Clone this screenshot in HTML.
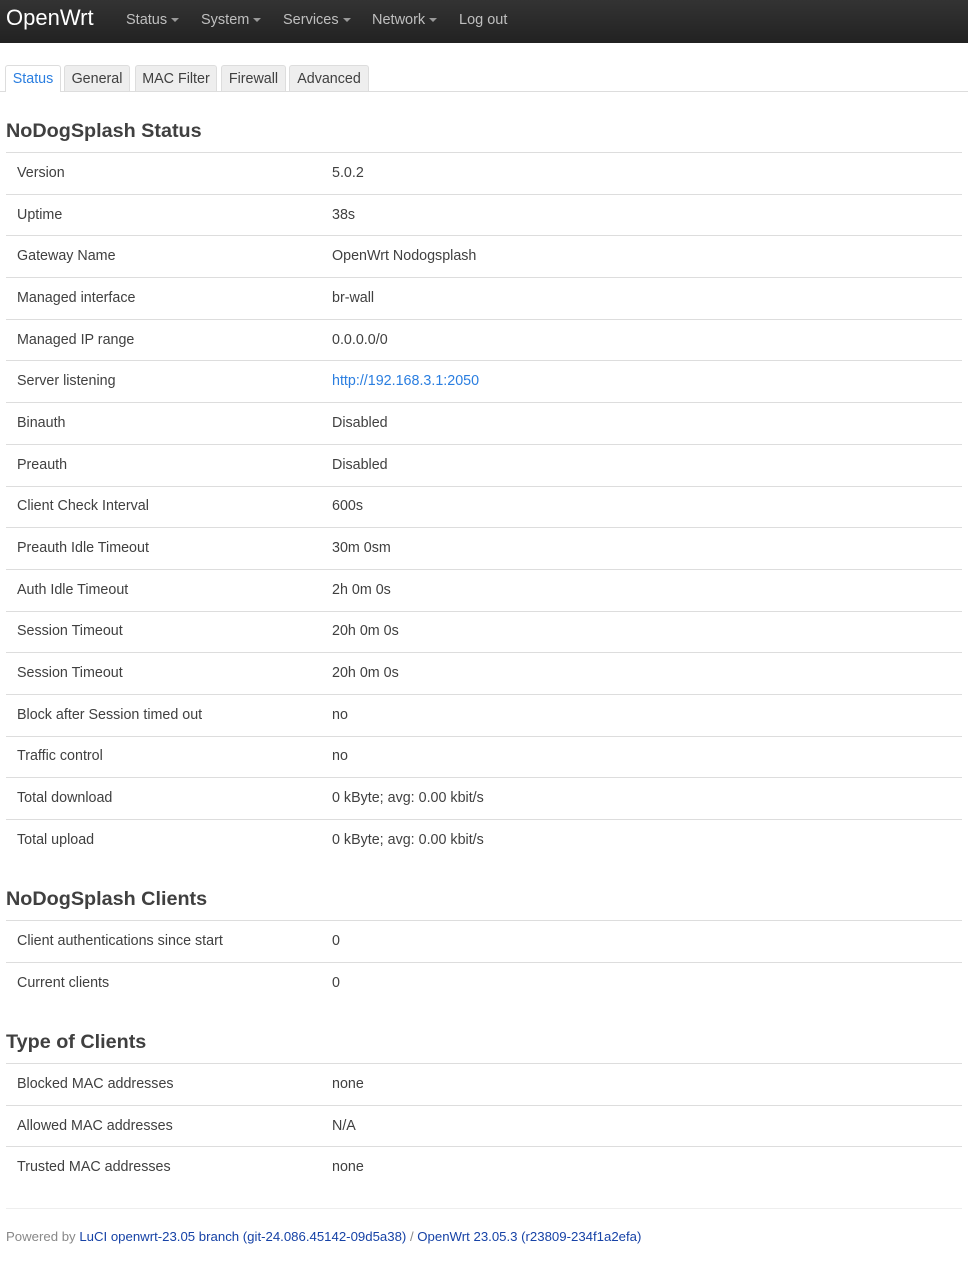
<!DOCTYPE html>
<html><head><meta charset="utf-8"><style>
body{margin:0;background:#fff;font-family:"Liberation Sans",sans-serif;color:#404040;font-size:14.3px;}
.hdr{height:43px;background:linear-gradient(#333,#222);position:relative;}
.brand{position:absolute;left:6px;top:5px;color:#fff;font-size:22px;}
.nav{position:absolute;top:12px;color:#bfbfbf;font-size:14.5px;}
.car{display:inline-block;border-top:4px solid #999;border-left:4px solid transparent;border-right:4px solid transparent;vertical-align:middle;margin-left:4px;}
.tabs{position:absolute;top:65px;left:0;right:0;height:26px;border-bottom:1px solid #ddd;}
.tab{position:absolute;top:0;height:25px;line-height:26px;background:#eee;border:1px solid #ddd;border-bottom:none;border-radius:3px 3px 0 0;text-align:center;color:#404040;}
.tab.a{background:#fff;color:#2a7ee0;height:26px;}
h2{position:absolute;left:6px;margin:0;font-size:19.8px;font-weight:bold;color:#404040;}
table{position:absolute;left:6px;width:956px;border-collapse:collapse;}
td{height:41.7px;padding:0 0 1px 0;border-top:1px solid #ddd;box-sizing:border-box;}
td:first-child{padding-left:11px;width:326px;}
a{color:#1a5ec7;text-decoration:none;}
.foot{position:absolute;left:6px;right:6px;top:1208px;border-top:1px solid #eee;padding-top:20px;font-size:13.2px;color:#888;}
.foot a{color:#1642a6;}
</style></head><body>
<div class="hdr">
<div class="brand">OpenWrt</div>
<div class="nav" style="left:126px">Status<span class="car"></span></div>
<div class="nav" style="left:201px">System<span class="car"></span></div>
<div class="nav" style="left:283px">Services<span class="car"></span></div>
<div class="nav" style="left:372px">Network<span class="car"></span></div>
<div class="nav" style="left:459px">Log out</div>
</div>
<div class="tabs">
<div class="tab a" style="left:5px;width:54px">Status</div>
<div class="tab" style="left:64px;width:64px">General</div>
<div class="tab" style="left:135px;width:80px">MAC Filter</div>
<div class="tab" style="left:221px;width:63px">Firewall</div>
<div class="tab" style="left:289px;width:78px">Advanced</div>
</div>
<h2 style="top:120px">NoDogSplash Status</h2>
<table style="top:152px">
<tr><td>Version</td><td>5.0.2</td></tr>
<tr><td>Uptime</td><td>38s</td></tr>
<tr><td>Gateway Name</td><td>OpenWrt Nodogsplash</td></tr>
<tr><td>Managed interface</td><td>br-wall</td></tr>
<tr><td>Managed IP range</td><td>0.0.0.0/0</td></tr>
<tr><td>Server listening</td><td><a style="color:#2a7ee0">http://192.168.3.1:2050</a></td></tr>
<tr><td>Binauth</td><td>Disabled</td></tr>
<tr><td>Preauth</td><td>Disabled</td></tr>
<tr><td>Client Check Interval</td><td>600s</td></tr>
<tr><td>Preauth Idle Timeout</td><td>30m 0sm</td></tr>
<tr><td>Auth Idle Timeout</td><td>2h 0m 0s</td></tr>
<tr><td>Session Timeout</td><td>20h 0m 0s</td></tr>
<tr><td>Session Timeout</td><td>20h 0m 0s</td></tr>
<tr><td>Block after Session timed out</td><td>no</td></tr>
<tr><td>Traffic control</td><td>no</td></tr>
<tr><td>Total download</td><td>0 kByte; avg: 0.00 kbit/s</td></tr>
<tr><td>Total upload</td><td>0 kByte; avg: 0.00 kbit/s</td></tr>
</table>
<h2 style="top:888px">NoDogSplash Clients</h2>
<table style="top:920px">
<tr><td>Client authentications since start</td><td>0</td></tr>
<tr><td>Current clients</td><td>0</td></tr>
</table>
<h2 style="top:1031px">Type of Clients</h2>
<table style="top:1063px">
<tr><td>Blocked MAC addresses</td><td>none</td></tr>
<tr><td>Allowed MAC addresses</td><td>N/A</td></tr>
<tr><td>Trusted MAC addresses</td><td>none</td></tr>
</table>
<div class="foot">Powered by <a>LuCI openwrt-23.05 branch (git-24.086.45142-09d5a38)</a> / <a>OpenWrt 23.05.3 (r23809-234f1a2efa)</a></div>
</body></html>
